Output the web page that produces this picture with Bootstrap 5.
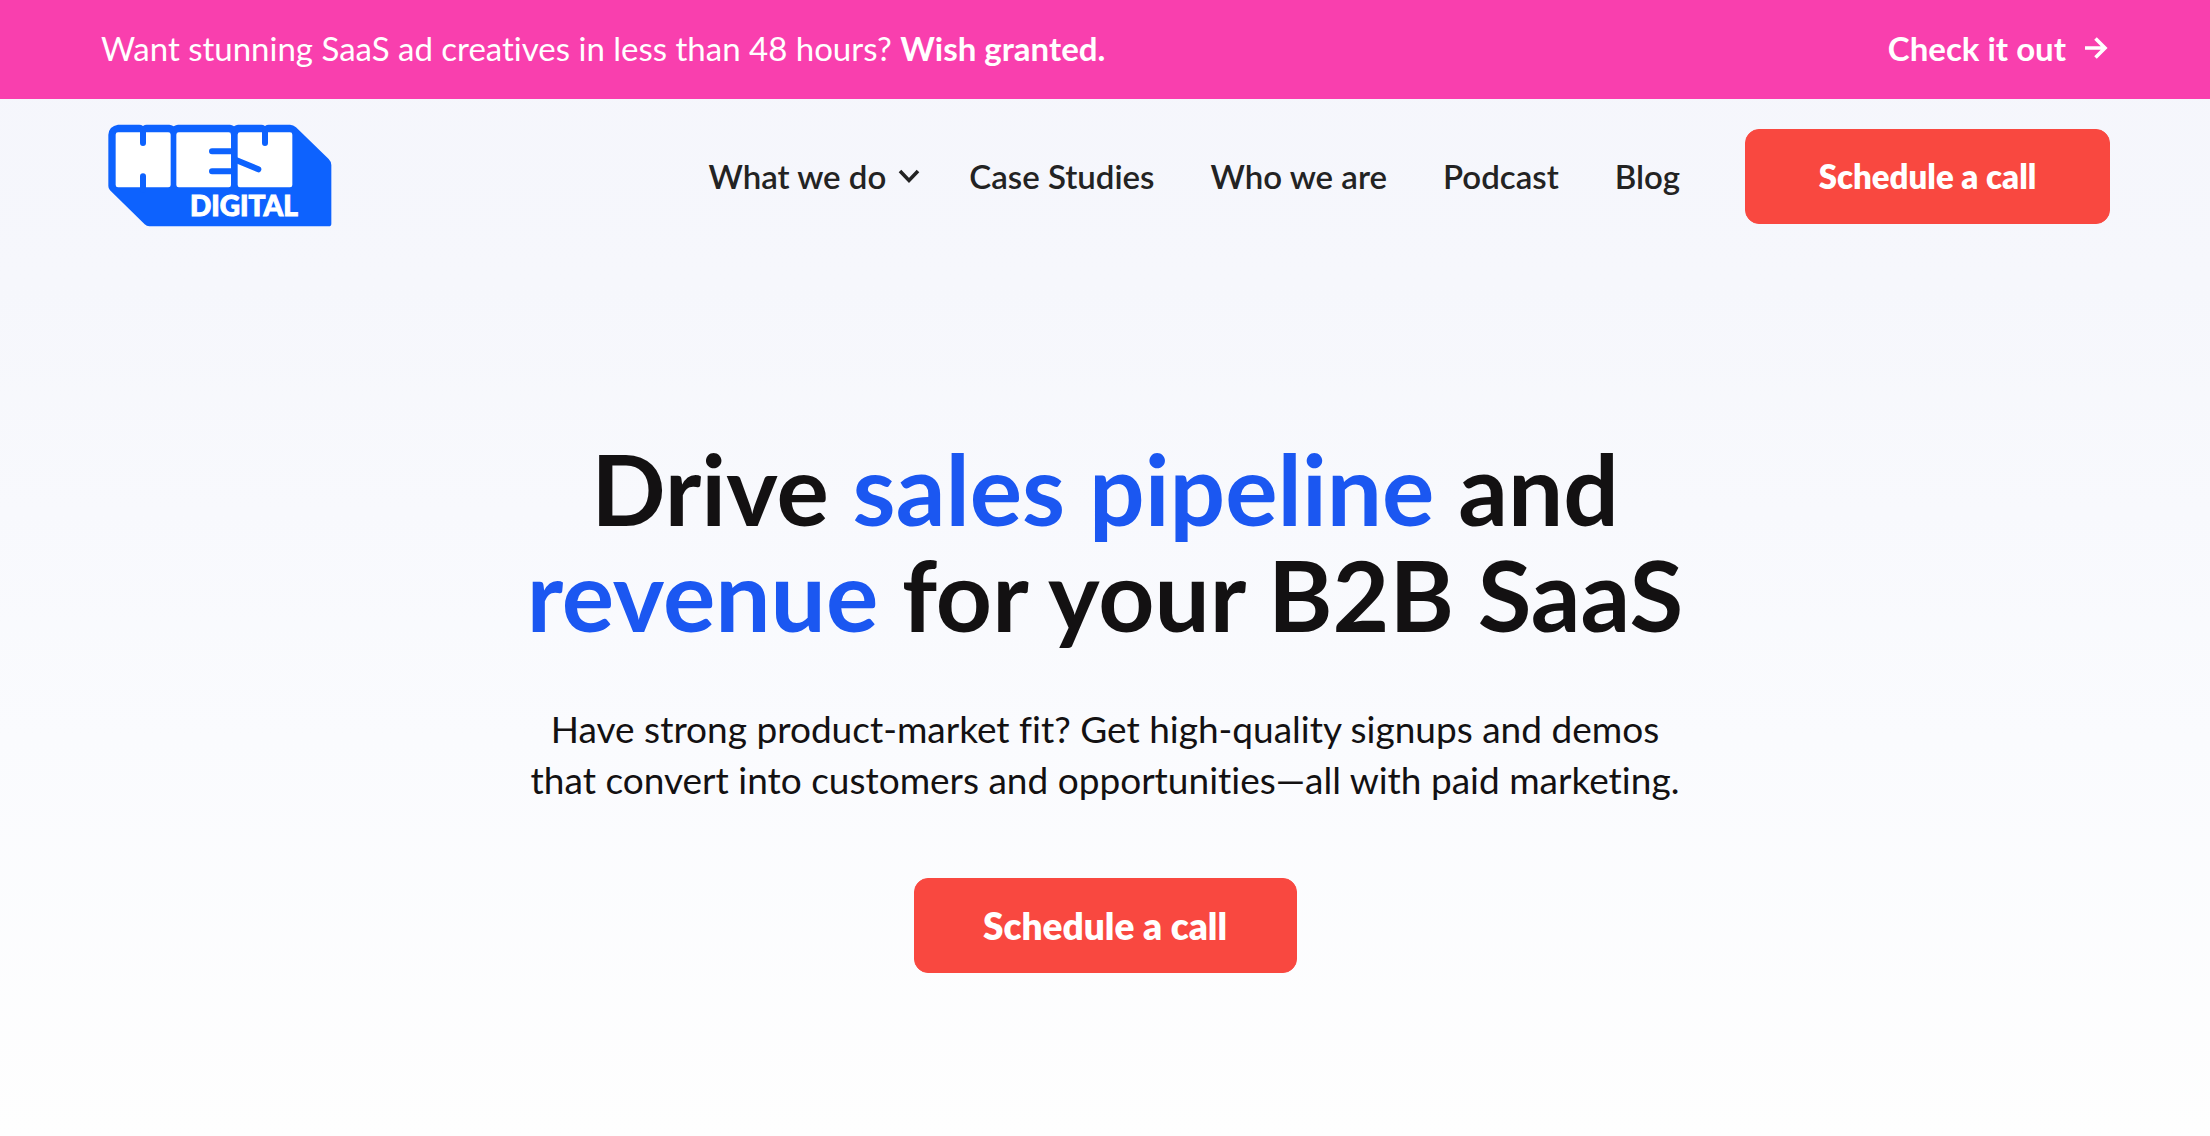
<!DOCTYPE html>
<html lang="en">
<head>
<meta charset="utf-8">
<meta name="viewport" content="width=device-width, initial-scale=1">
<title>Hey Digital</title>
<link href="https://cdn.jsdelivr.net/npm/bootstrap@5.3.0/dist/css/bootstrap.min.css" rel="stylesheet">
<style>
body{font-family:Lato,"Open Sans",sans-serif;font-size:33px;line-height:48px;color:#131112;font-variant-ligatures:none;min-height:100vh;background:linear-gradient(#f5f6fc 0,#f6f7fc 25%,#fafbfe 65%,#fefefe 100%)}
.promo{background:#f93fae;padding:24px 102px 27px 101px}
.promo a{gap:18px}
.site-nav{padding:25px 100px 0 108px}
.site-nav .navbar-nav{gap:40px;margin-right:57px}
.site-nav .nav-link{color:#232323;font-weight:600;padding:0}
.site-nav .dropdown-link{gap:12px;margin-right:-7px}
.cta{--bs-btn-color:#fff;--bs-btn-bg:#f94840;--bs-btn-border-color:#f94840;--bs-btn-hover-bg:#e63d36;--bs-btn-hover-color:#fff;--bs-btn-border-radius:14px;--bs-btn-font-weight:800;--bs-btn-font-size:33px;--bs-btn-padding-y:23px;--bs-btn-padding-x:20px;--bs-btn-line-height:47px;min-width:365px}
.cta-lg{--bs-btn-font-size:37px;min-width:383px}
.hero{padding:207px 24px 120px}
.hero h1{font-size:98px;line-height:106px;font-weight:700;margin-bottom:56px}
.hero h1 span{color:#1b57f1}
.hero p{font-size:37px;line-height:51px;margin-bottom:73px}
</style>
<script src="https://cdn.jsdelivr.net/npm/bootstrap@5.3.0/dist/js/bootstrap.bundle.min.js" defer></script>
</head>
<body>
<div class="promo d-flex flex-wrap justify-content-between align-items-center text-white">
  <div>Want stunning SaaS ad creatives in less than 48 hours? <strong>Wish granted.</strong></div>
  <a href="#" class="d-flex align-items-center text-white text-decoration-none fw-bold">Check it out
    <svg width="24" height="24" viewBox="0 0 24 24" fill="none" stroke="#fff" stroke-width="3.6" aria-hidden="true"><path d="M1 12H20M11.500 2.500 21 12l-9.500 9.500"/></svg></a>
</div>
<header>
  <nav class="navbar navbar-expand site-nav d-flex align-items-center">
    <a class="navbar-brand p-0 m-0 d-flex" href="#" aria-label="Hey Digital">
      <svg width="224" height="104" viewBox="54 43 672 312">
        <path d="M84 45H148q6 0 11 4 5-4 11-4H238q6 0 13 5 7-5 13-5H420q6 0 12 5 6-5 12-5H514q6 0 11 4 5-4 11-4H600q10 0 18 8L716 148q8 8 8 18V342q0 8-8 8H178q-8 0-14-6L60 242q-5-5-5-13V75Q57 49 84 45Z" fill="#0d62fe"/>
        <g fill="#fff"><rect x="77" y="68" width="165" height="165" rx="7"/><rect x="259" y="68" width="164" height="165" rx="7"/><rect x="443" y="68" width="164" height="165" rx="7"/></g>
        <g fill="none" stroke="#0d62fe" stroke-width="18" stroke-linecap="round"><path d="M159 60V100M159 240V200M430 125H366M430 185H366M525 60V100M436 150 505 179"/></g>
        <text x="300" y="318" font-family="Lato,sans-serif" font-weight="900" font-size="84" fill="#fff" stroke="#fff" stroke-width="3">DIGITAL</text>
      </svg>
    </a>
    <ul class="navbar-nav ms-auto">
      <li class="nav-item"><a class="nav-link dropdown-link d-flex align-items-center" href="#">What we do
        <svg width="22" height="16" viewBox="0 0 22 16" fill="none" stroke="#232323" stroke-width="3.6" aria-hidden="true"><path d="M2 3 11 12.500 20 3"/></svg></a></li>
      <li class="nav-item"><a class="nav-link" href="#">Case Studies</a></li>
      <li class="nav-item"><a class="nav-link" href="#">Who we are</a></li>
      <li class="nav-item"><a class="nav-link" href="#">Podcast</a></li>
      <li class="nav-item"><a class="nav-link" href="#">Blog</a></li>
    </ul>
    <button type="button" class="btn cta">Schedule a call</button>
  </nav>
</header>
<main class="hero text-center">
  <h1>Drive <span>sales pipeline</span> and<br><span>revenue</span> for your B2B SaaS</h1>
  <p>Have strong product-market fit? Get high-quality signups and demos<br>that convert into customers and opportunities—all with paid marketing.</p>
  <button type="button" class="btn cta cta-lg">Schedule a call</button>
</main>
</body>
</html>
